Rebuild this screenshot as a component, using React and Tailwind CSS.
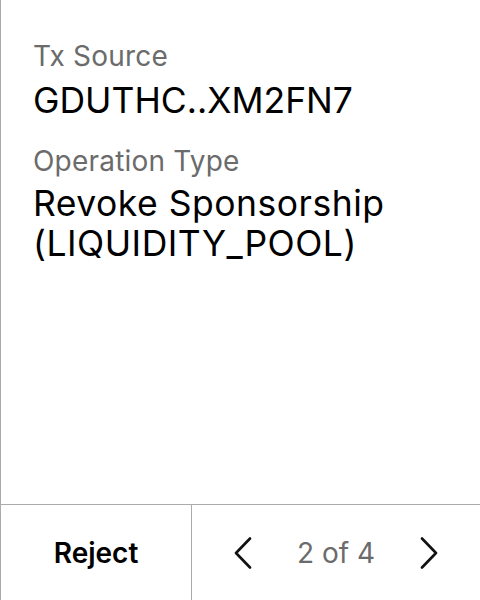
import React from 'react';

const Chevron = ({ dir }) => (
  <svg width="18" height="32" viewBox="0 0 18 32" fill="none" stroke="#111" strokeWidth="2.6" strokeLinecap="round" strokeLinejoin="round">
    {dir === 'left' ? <path d="M16 1.5 L2 16 L16 30.5" /> : <path d="M2 1.5 L16 16 L2 30.5" />}
  </svg>
);

const Field = ({ label, value, className }) => (
  <div className={className}>
    <div className="text-[28px] leading-[32px] tracking-[0.2px] text-[#6b6b6b]">{label}</div>
    {value}
  </div>
);

export default function App() {
  return (
    <div className="h-screen w-full flex flex-col bg-white border-l border-[#ababab] text-black" style={{ fontFamily: 'Inter, "Noto Sans", sans-serif' }}>
      {/* details */}
      <div className="flex-1 pl-[32px] pr-4 pt-[40px]">
        <Field
          label="Tx Source"
          value={<div className="mt-[9px] text-[35.5px] leading-[40px]">GDUTHC..XM2FN7</div>}
        />
        <Field
          className="mt-[24px]"
          label="Operation Type"
          value={<div className="mt-[7px] text-[35.5px] leading-[40px] tracking-[0.5px]">Revoke Sponsorship<br />(LIQUIDITY_POOL)</div>}
        />
      </div>

      {/* footer */}
      <div className="h-[96px] flex border-t border-[#ababab]">
        <button className="w-[191px] border-r border-[#ababab] flex items-center justify-center text-[28px] font-semibold">
          Reject
        </button>
        <div className="flex-1 flex items-center justify-between px-[42px]">
          <Chevron dir="left" />
          <span className="text-[28px] text-[#6b6b6b]">2 of 4</span>
          <Chevron dir="right" />
        </div>
      </div>
    </div>
  );
}
